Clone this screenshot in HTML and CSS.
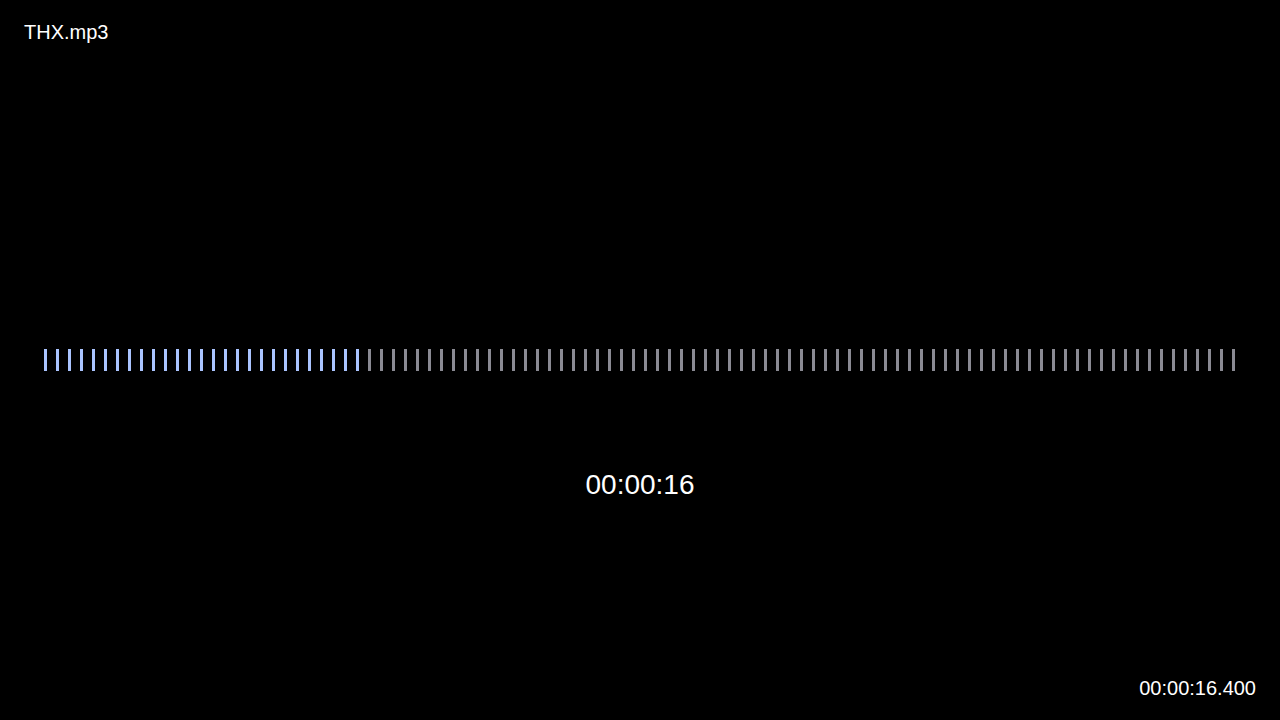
FILE: index.html
```html
<!DOCTYPE html>
<html lang="en">
<head>
<meta charset="utf-8">
<title>THX.mp3</title>
<link rel="stylesheet" href="styles.css">
</head>
<body>
<div class="player">
  <header class="title">THX.mp3</header>
  <main class="stage">
    <div class="spacer"></div>
    <div class="wave">
      <span class="bar played"></span><span class="bar played"></span><span class="bar played"></span><span class="bar played"></span><span class="bar played"></span><span class="bar played"></span><span class="bar played"></span><span class="bar played"></span><span class="bar played"></span><span class="bar played"></span>
      <span class="bar played"></span><span class="bar played"></span><span class="bar played"></span><span class="bar played"></span><span class="bar played"></span><span class="bar played"></span><span class="bar played"></span><span class="bar played"></span><span class="bar played"></span><span class="bar played"></span>
      <span class="bar played"></span><span class="bar played"></span><span class="bar played"></span><span class="bar played"></span><span class="bar played"></span><span class="bar played"></span><span class="bar played"></span><span class="bar"></span><span class="bar"></span><span class="bar"></span>
      <span class="bar"></span><span class="bar"></span><span class="bar"></span><span class="bar"></span><span class="bar"></span><span class="bar"></span><span class="bar"></span><span class="bar"></span><span class="bar"></span><span class="bar"></span>
      <span class="bar"></span><span class="bar"></span><span class="bar"></span><span class="bar"></span><span class="bar"></span><span class="bar"></span><span class="bar"></span><span class="bar"></span><span class="bar"></span><span class="bar"></span>
      <span class="bar"></span><span class="bar"></span><span class="bar"></span><span class="bar"></span><span class="bar"></span><span class="bar"></span><span class="bar"></span><span class="bar"></span><span class="bar"></span><span class="bar"></span>
      <span class="bar"></span><span class="bar"></span><span class="bar"></span><span class="bar"></span><span class="bar"></span><span class="bar"></span><span class="bar"></span><span class="bar"></span><span class="bar"></span><span class="bar"></span>
      <span class="bar"></span><span class="bar"></span><span class="bar"></span><span class="bar"></span><span class="bar"></span><span class="bar"></span><span class="bar"></span><span class="bar"></span><span class="bar"></span><span class="bar"></span>
      <span class="bar"></span><span class="bar"></span><span class="bar"></span><span class="bar"></span><span class="bar"></span><span class="bar"></span><span class="bar"></span><span class="bar"></span><span class="bar"></span><span class="bar"></span>
      <span class="bar"></span><span class="bar"></span><span class="bar"></span><span class="bar"></span><span class="bar"></span><span class="bar"></span><span class="bar"></span><span class="bar"></span><span class="bar"></span><span class="bar"></span>
    </div>
    <div class="below">
      <div class="clock">00:00:16</div>
    </div>
  </main>
  <footer class="position">00:00:16.400</footer>
</div>
</body>
</html>
```

FILE: styles.css
```css
html, body {
  margin: 0;
  padding: 0;
  background: #000;
}

body {
  font-family: "Liberation Sans", Arial, sans-serif;
  color: #fff;
}

.player {
  height: 720px;
  display: grid;
  grid-template-rows: auto 1fr auto;
  overflow: hidden;
}

.title {
  padding: 21px 24px 0;
  font-size: 20px;
  line-height: 22px;
}

.stage {
  display: grid;
  grid-template-rows: 1fr auto 1fr;
}

.wave {
  display: flex;
  align-items: center;
  gap: 9px;
  padding: 0 44px;
  height: 22px;
}

.bar {
  flex: 0 0 3px;
  height: 22px;
  background: #8a8a93;
}

.bar.played {
  background: #aac4ff;
}

.below {
  display: flex;
  justify-content: center;
  align-items: flex-start;
  padding-top: 98px;
}

.clock {
  font-size: 28px;
  line-height: 32px;
}

.position {
  text-align: right;
  padding: 0 24px 20px;
  font-size: 20px;
  line-height: 23px;
}
```
